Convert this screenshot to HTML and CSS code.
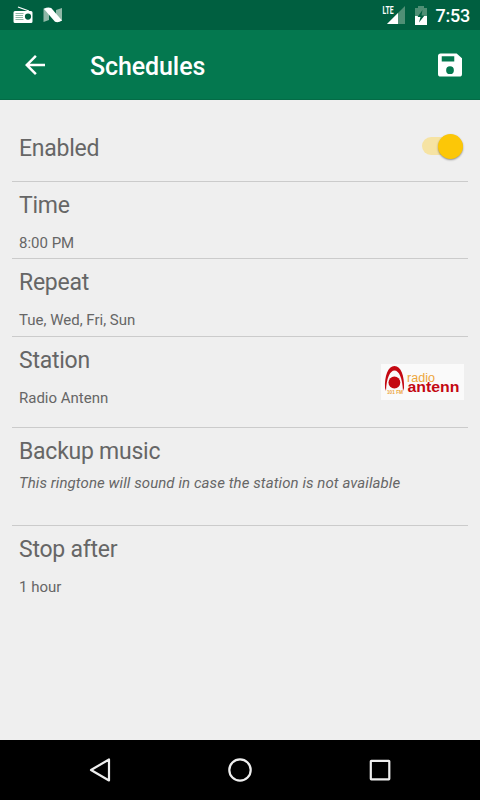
FILE: index.html
```html
<!DOCTYPE html>
<html lang="en">
<head>
  <meta charset="utf-8">
  <title>Schedules</title>
  <link rel="stylesheet" href="styles.css">
</head>
<body>
  <!-- Status bar -->
  <div class="status">
    <svg width="20" height="18" viewBox="0 0 20 18">
      <path d="M5 1l11 4" stroke="#fff" stroke-width="1.3"/>
      <path fill="#fff" fill-rule="evenodd" d="M2 5h16a1.500 1.500 0 0 1 1.500 1.500v9A1.500 1.500 0 0 1 18 17H2a1.500 1.500 0 0 1-1.500-1.500v-9A1.500 1.500 0 0 1 2 5zM15 7.500a3 3 0 1 0 0 6.200 3 3 0 1 0 0-6.200z"/>
      <path d="M2.500 7.500H10.500M2.500 9.500H10M2.500 11.500H10M2.500 13.500H10.500" stroke="#8fb8a7" stroke-width="1"/>
    </svg>
    <svg class="n-icon" width="20" height="16" viewBox="0 0 20 16">
      <path fill="#8fb8a7" d="M.5 1.500L6 3v10L.5 15zM19 1v13l-6-1.500V3z"/>
      <path fill="#fff" d="M.8 1.800Q5-.5 8.200 1L19 13.500Q15.500 16 12 14.800z"/>
    </svg>
    <div class="spacer"></div>
    <svg class="signal" width="24" height="20" viewBox="0 0 24 20">
      <path fill="#4f8f75" d="M23 1v18H5z"/>
      <path fill="#fff" d="M16 8v11H5z"/>
      <path fill="#005f40" d="M0 0h12.500v10H0z"/>
      <text class="lte" x=".5" y="9" textLength="11" lengthAdjust="spacingAndGlyphs">LTE</text>
    </svg>
    <svg class="battery" width="12" height="19" viewBox="0 0 12 19">
      <path fill="#4f8f75" d="M3 0h6v2h3v9H0V2h3z"/>
      <path fill="#fff" d="M0 10h12v9H0z"/>
      <path fill="#005f40" d="M7.500 4L2.500 11h3l-1.500 5.500L9.500 9.500h-3z"/>
    </svg>
    <span class="clock">7:53</span>
  </div>

  <!-- Toolbar -->
  <div class="toolbar">
    <svg width="30" height="30" viewBox="0 0 24 24" fill="#fff"><path d="M20 11H7.830l5.590-5.590L12 4l-8 8 8 8 1.410-1.410L7.830 13H20v-2z"/></svg>
    <h1>Schedules</h1>
    <svg width="32" height="32" viewBox="0 0 24 24" fill="#fff"><path fill-rule="evenodd" d="M17 3.300H5a2 2 0 0 0-2 2v13.400a2 2 0 0 0 2 2h14a2 2 0 0 0 2-2V7zM5.800 5.500h9.400v3.800H5.800zM12 13a2.900 2.900 0 1 1 0 5.800 2.900 2.900 0 1 1 0-5.800z"/></svg>
  </div>

  <!-- Settings -->
  <div class="list">
    <div class="row row-enabled">
      <h2>Enabled</h2>
      <div class="switch"></div>
    </div>
    <div class="row row-time">
      <h2>Time</h2>
      <p>8:00 PM</p>
    </div>
    <div class="row row-repeat">
      <h2>Repeat</h2>
      <p>Tue, Wed, Fri, Sun</p>
    </div>
    <div class="row row-station">
      <div>
        <h2>Station</h2>
        <p>Radio Antenn</p>
      </div>
      <svg class="logo" width="83" height="36" viewBox="0 0 83 36">
        <rect width="83" height="36" fill="#fafafa"/>
        <path fill="#c40812" fill-rule="evenodd" d="M4 24C3.500 12 7 2 13.500 2S23.500 12 23 24L22 27C21.500 14 18 6.500 13.500 6.500S5.500 14 5 27z"/>
        <circle cx="13.400" cy="18.500" r="5.900" fill="#c40812"/>
        <text class="logo-fm" x="6" y="30" textLength="16" lengthAdjust="spacingAndGlyphs">101 FM</text>
        <text class="logo-radio" x="26" y="18" textLength="28" lengthAdjust="spacingAndGlyphs">radio</text>
        <text class="logo-name" x="26.500" y="28" textLength="52" lengthAdjust="spacingAndGlyphs">antenn</text>
      </svg>
    </div>
    <div class="row row-backup">
      <h2>Backup music</h2>
      <p class="hint">This ringtone will sound in case the station is not available</p>
    </div>
    <div class="row row-stop">
      <h2>Stop after</h2>
      <p>1 hour</p>
    </div>
  </div>

  <!-- Navigation bar -->
  <div class="navbar">
    <svg width="28" height="28" viewBox="0 0 28 28"><path d="M23 3.500v21L5 14z"/></svg>
    <svg width="28" height="28" viewBox="0 0 28 28"><circle cx="14" cy="14" r="10.700"/></svg>
    <svg width="28" height="28" viewBox="0 0 28 28"><rect x="4.800" y="4.800" width="18.500" height="18.500" rx=".5"/></svg>
  </div>
</body>
</html>
```
FILE: styles.css
```css
*{box-sizing:border-box;}
body{
  margin:0;
  height:800px;
  display:flex;
  flex-direction:column;
  font-family:Roboto,sans-serif;
  background:#efefef;
  color:#666;
  overflow:hidden;
}
h1,h2,p{margin:0;font-weight:400;}
svg{display:block;flex:none;}

.status{
  height:30px;
  background:#005f40;
  display:flex;
  align-items:center;
  padding:0 10px 0 13px;
}
.n-icon{margin-left:10px;}
.spacer{flex:1;}
.lte{font:700 10px Roboto,sans-serif;fill:#fff;}
.battery{margin-left:9px;}
.clock{
  margin-left:9px;
  font-size:18px;
  font-weight:500;
  line-height:30px;
  letter-spacing:-.25px;
  color:#fff;
  padding-top:2px;
}

.toolbar{
  height:70px;
  background:#04784f;
  border-bottom:1px solid #046b46;
  display:flex;
  align-items:center;
  padding:0 14px 0 20px;
}
.toolbar h1{
  flex:1;
  margin-left:40px;
  font-size:25px;
  font-weight:500;
  letter-spacing:-.1px;
  color:#fff;
  padding-top:3px;
}

.list{flex:1;padding:0 12px;}
.row{
  border-bottom:1px solid #cbcbcb;
  padding:9px 4px 0 7px;
}
.row h2{font-size:23px;line-height:30px;letter-spacing:-.25px;}
.row p{font-size:15px;line-height:18px;margin-top:12.500px;}
.row .hint{font-style:italic;margin-top:6.500px;letter-spacing:.08px;}
.row-enabled{
  height:82px;
  display:flex;
  justify-content:space-between;
  padding:34px 5px 0 7px;
}
.row-time{height:77px;}
.row-repeat{height:78px;}
.row-station{height:91px;display:flex;justify-content:space-between;}
.row-backup{height:98px;}
.row-stop{border-bottom:none;}

.switch{
  width:41px;
  height:18px;
  margin-top:3px;
  border-radius:9px;
  background:#f6e3a3;
  display:flex;
  align-items:center;
  justify-content:flex-end;
}
.switch::after{
  content:"";
  width:25px;
  height:25px;
  border-radius:50%;
  background:#fcc707;
  box-shadow:0 1px 2px rgba(0,0,0,.4);
}

.logo{margin-top:18px;}
.logo-fm{font:700 6px "Liberation Sans",sans-serif;fill:#eda63a;}
.logo-radio{font:12px "Liberation Sans",sans-serif;fill:#eda63a;}
.logo-name{font:700 14px "Liberation Sans",sans-serif;fill:#c40812;}

.navbar{
  height:60px;
  background:#000;
  display:flex;
  align-items:center;
  justify-content:center;
  gap:112px;
}
.navbar svg{
  fill:none;
  stroke:#eee;
  stroke-width:2.2;
  stroke-linejoin:round;
}
```
